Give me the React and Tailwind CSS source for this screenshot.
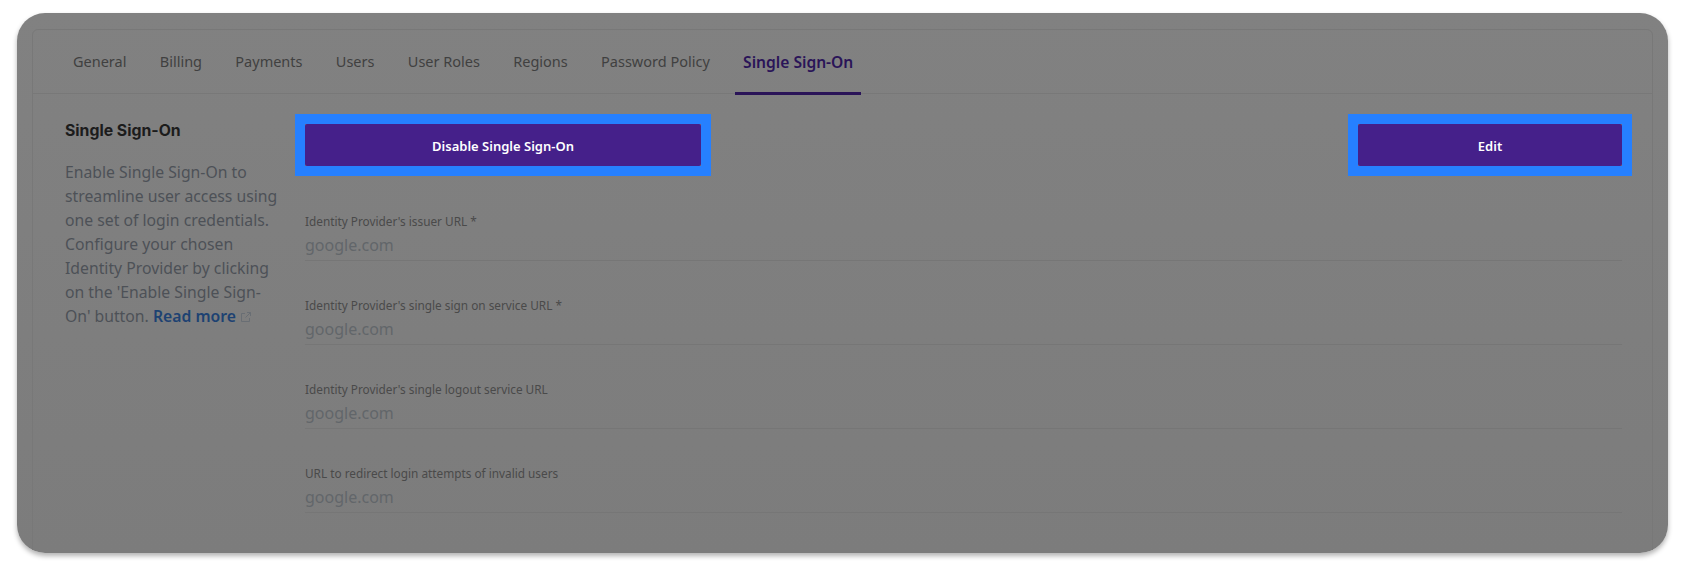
import React from 'react';

const tabs = ['General', 'Billing', 'Payments', 'Users', 'User Roles', 'Regions', 'Password Policy'];

const fields = [
  "Identity Provider's issuer URL *",
  "Identity Provider's single sign on service URL *",
  "Identity Provider's single logout service URL",
  'URL to redirect login attempts of invalid users',
];

const HighlightButton = ({ label, className }) => (
  <div className={`border-[10px] border-[#2680ff] ${className}`}>
    <button className="h-[42px] w-full rounded-[2px] bg-[#45208a] pt-[4px] text-[13px] font-semibold text-white">
      {label}
    </button>
  </div>
);

const ExternalIcon = () => (
  <svg className="ml-[4px] inline-block h-[12px] w-[12px] align-[-1px]" viewBox="0 0 12 12" fill="none" stroke="#696e74" strokeWidth="1">
    <path d="M9.5 7v3.5h-8v-8H5" />
    <path d="M7 1.5h3.5V5M10.5 1.5 5.5 6.5" />
  </svg>
);

const App = () => {
  return (
    <div className="h-[575px] w-full overflow-hidden bg-white pl-[17px] pr-[19px] pt-[13px] font-['Noto_Sans',sans-serif]">
      <div className="h-[540px] overflow-hidden rounded-[28px] bg-gradient-to-b from-[#818181] to-[#7c7c7c] px-[15px] pt-[16px] shadow-[0_3px_5px_rgba(0,0,0,0.3)]">
        <div className="h-[560px] rounded-[6px] border border-[#787878]">
          <div className="flex h-[64px] border-b border-[#787878] pl-[32px]">
            {tabs.map((tab) => (
              <div key={tab} className="mr-[17.3px] flex items-center px-[8px] text-[14.5px] text-[#404040]">
                {tab}
              </div>
            ))}
            <div className="-mb-[2px] flex h-[65px] items-center border-b-[3px] border-[#2a1458] px-[8px] pt-[3px] text-[15.6px] font-semibold text-[#2a1458]">
              Single Sign-On
            </div>
          </div>
          <div className="flex">
            <div className="w-[262px] shrink-0 pl-[32px] pt-[27px]">
              <h2 className="font-['Inter',sans-serif] text-[15.8px] font-bold leading-[20px] text-[#1c1c1c]">Single Sign-On</h2>
              <p className="mt-[19px] w-[218px] text-[15.75px] leading-[24px] text-[#4d5157]">
                Enable Single Sign-On to streamline user access using one set of login credentials. Configure your chosen Identity Provider by clicking on the 'Enable Single Sign-On' button.{' '}
                <span className="font-semibold text-[#1d4272]">Read more</span>
                <ExternalIcon />
              </p>
            </div>
            <div className="flex-1 pr-[20px] pt-[20px]">
              <div className="flex justify-between">
                <HighlightButton label="Disable Single Sign-On" className="w-[416px]" />
                <HighlightButton label="Edit" className="w-[284px]" />
              </div>
              <div className="ml-[10px] mr-[10px] mt-[35px] flex flex-col gap-[34px]">
                {fields.map((field) => (
                  <div key={field} className="h-[50px] border-b border-[#767676]">
                    <div className="text-[11.8px] leading-[20px] text-[#4a4a4a]">{field}</div>
                    <div className="mt-[2px] text-[16px] leading-[24px] text-[#62666a]">google.com</div>
                  </div>
                ))}
              </div>
            </div>
          </div>
        </div>
      </div>
    </div>
  );
};

export default App;
